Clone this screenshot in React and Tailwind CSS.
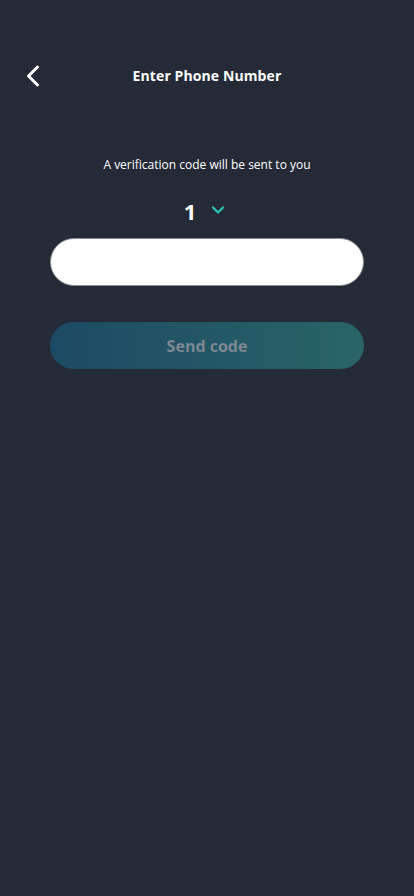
import { ChevronLeft, ChevronDown } from "lucide-react";

export default function App() {
	return (
		<div
			className="min-h-[896px] w-full bg-[#252a37] text-white"
			style={{ fontFamily: "'Open Sans', 'Noto Sans', sans-serif" }}
		>
			{/* header */}
			<div className="relative flex h-[56px] items-center justify-center pt-[47px] box-content">
				<button className="absolute left-[15px] top-[58px] text-white">
					<ChevronLeft size={36} strokeWidth={2} />
				</button>
				<h1 className="text-[14px] font-bold tracking-[0.1px]">Enter Phone Number</h1>
			</div>

			<div className="flex flex-col items-center px-[50px]">
				<p className="mt-[56px] text-[12px] leading-none">A verification code will be sent to you</p>

				<div className="mt-[29px] flex items-center gap-[12px] pr-[2px]">
					<span className="text-[22px] font-bold leading-none">1</span>
					<ChevronDown size={20} strokeWidth={2.6} className="mt-[-2px] text-[#2ec4b6]" />
				</div>

				<input
					type="tel"
					className="mt-[16px] h-[48px] w-full rounded-full border border-[#8a8d94] bg-white px-5 text-black outline-none"
				/>

				<button className="mt-[36px] h-[47px] w-full rounded-full bg-gradient-to-r from-[#1c4a64] to-[#2a6467] text-[16px] font-bold text-[#7e8892]">
					Send code
				</button>
			</div>
		</div>
	);
}
